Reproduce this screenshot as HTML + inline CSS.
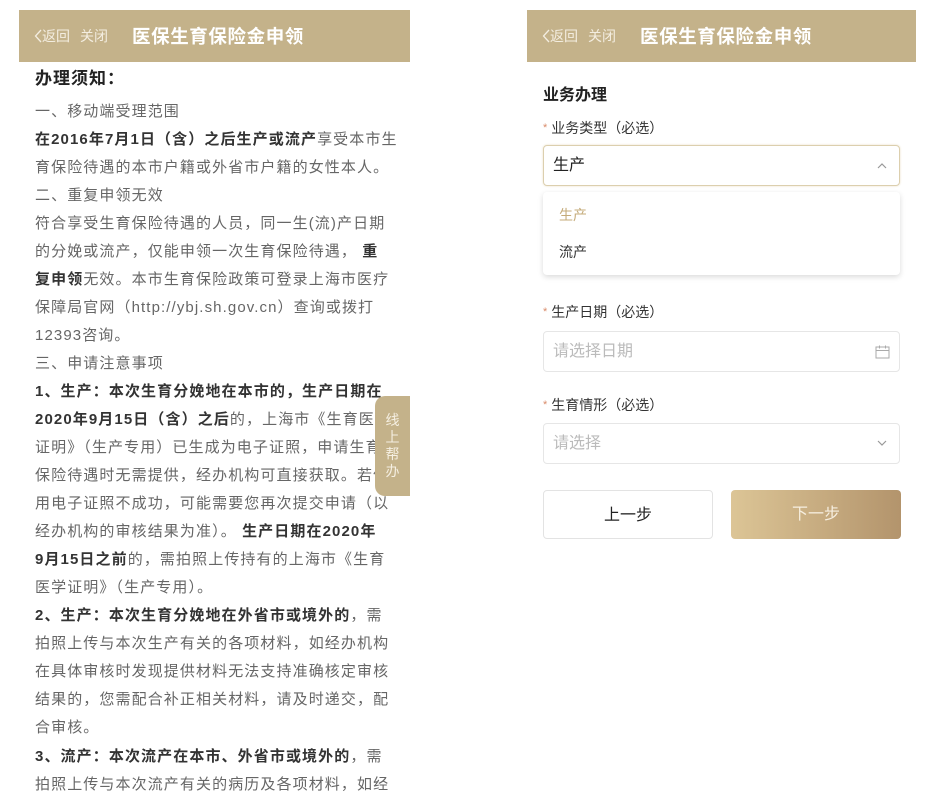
<!DOCTYPE html>
<html><head><meta charset="utf-8">
<style>
*{margin:0;padding:0;box-sizing:border-box}
body{width:930px;height:797px;background:#fff;position:relative;overflow:hidden;font-family:"Liberation Sans","Noto Sans CJK SC",sans-serif}
.hdr{position:absolute;top:10px;height:52px;background:#c4b28a;color:#fff;display:flex;align-items:center}
.hdr .s{font-size:14px;color:#f3ede0;letter-spacing:0;display:flex;align-items:center}
.hdr .t{font-size:18.5px;font-weight:bold;margin-left:24px;letter-spacing:0.6px}
.l{position:absolute;left:35px;font-size:15px;line-height:28px;height:28px;color:#666;letter-spacing:1.1px;white-space:nowrap}
.l b{color:#333}
.tab{position:absolute;left:375px;top:396px;width:35px;height:100px;background:#c4b28a;border-radius:10px 0 0 10px;color:#f5efe2;font-size:14px;line-height:17px;text-align:center;padding-top:16px}
.lab{position:absolute;left:543px;font-size:14px;color:#333;white-space:nowrap}
.lab i{color:#d98b6a;font-style:normal;font-size:11px;margin-right:4px;position:relative;top:-2px}
.box{position:absolute;left:543px;width:357px;height:41px;border:1px solid #e6e6e6;border-radius:4px;font-size:16px;color:#bbb;padding-left:9px;line-height:39px}
.btn{position:absolute;top:490px;height:49px;width:170px;border-radius:4px;font-size:16px;text-align:center;line-height:49px}
</style></head><body>
<div class="hdr" style="left:19px;width:391px"><span class="s" style="margin-left:15px"><svg width="8" height="14" viewBox="0 0 8 14"><path d="M7 1 L1.5 7 L7 13" fill="none" stroke="#f3ede0" stroke-width="1.3"/></svg>返回</span><span class="s" style="margin-left:10px">关闭</span><span class="t">医保生育保险金申领</span></div>
<div style="position:absolute;left:35px;top:64px;font-size:17px;font-weight:bold;color:#222;letter-spacing:1px">办理须知：</div>
<div class="l" style="top:98px">一、移动端受理范围</div>
<div class="l" style="top:126px"><b>在2016年7月1日（含）之后生产或流产</b>享受本市生</div>
<div class="l" style="top:154px">育保险待遇的本市户籍或外省市户籍的女性本人。</div>
<div class="l" style="top:182px">二、重复申领无效</div>
<div class="l" style="top:210px">符合享受生育保险待遇的人员，同一生(流)产日期</div>
<div class="l" style="top:238px">的分娩或流产，仅能申领一次生育保险待遇， <b>重</b></div>
<div class="l" style="top:266px"><b>复申领</b>无效。本市生育保险政策可登录上海市医疗</div>
<div class="l" style="top:294px">保障局官网（http://ybj.sh.gov.cn）查询或拨打</div>
<div class="l" style="top:322px">12393咨询。</div>
<div class="l" style="top:350px">三、申请注意事项</div>
<div class="l" style="top:378px"><b>1、生产：本次生育分娩地在本市的，生产日期在</b></div>
<div class="l" style="top:406px"><b>2020年9月15日（含）之后</b>的，上海市《生育医</div>
<div class="l" style="top:434px">证明》（生产专用）已生成为电子证照，申请生育</div>
<div class="l" style="top:462px">保险待遇时无需提供，经办机构可直接获取。若使</div>
<div class="l" style="top:490px">用电子证照不成功，可能需要您再次提交申请（以</div>
<div class="l" style="top:518px">经办机构的审核结果为准）。 <b>生产日期在2020年</b></div>
<div class="l" style="top:546px"><b>9月15日之前</b>的，需拍照上传持有的上海市《生育</div>
<div class="l" style="top:574px">医学证明》（生产专用）。</div>
<div class="l" style="top:602px"><b>2、生产：本次生育分娩地在外省市或境外的</b>，需</div>
<div class="l" style="top:630px">拍照上传与本次生产有关的各项材料，如经办机构</div>
<div class="l" style="top:658px">在具体审核时发现提供材料无法支持准确核定审核</div>
<div class="l" style="top:686px">结果的，您需配合补正相关材料，请及时递交，配</div>
<div class="l" style="top:714px">合审核。</div>
<div class="l" style="top:743px"><b>3、流产：本次流产在本市、外省市或境外的</b>，需</div>
<div class="l" style="top:771px">拍照上传与本次流产有关的病历及各项材料，如经</div>
<div class="tab">线<br>上<br>帮<br>办</div>

<div class="hdr" style="left:527px;width:389px"><span class="s" style="margin-left:15px"><svg width="8" height="14" viewBox="0 0 8 14"><path d="M7 1 L1.5 7 L7 13" fill="none" stroke="#f3ede0" stroke-width="1.3"/></svg>返回</span><span class="s" style="margin-left:10px">关闭</span><span class="t">医保生育保险金申领</span></div>
<div style="position:absolute;left:543px;top:81px;font-size:16px;font-weight:bold;color:#222">业务办理</div>
<div class="lab" style="top:118px"><i>*</i>业务类型（必选）</div>
<div class="box" style="top:145px;border-color:#dccfae;color:#222;box-shadow:0 0 2px #eadfc5">生产
<svg style="position:absolute;right:12px;top:16px" width="10" height="7" viewBox="0 0 10 7"><path d="M1 6 L5 2 L9 6" fill="none" stroke="#999" stroke-width="1.2"/></svg></div>
<div style="position:absolute;left:543px;top:192px;width:357px;height:83px;background:#fff;border-radius:4px;box-shadow:0 2px 6px rgba(0,0,0,0.15)">
<div style="position:absolute;left:16px;top:13px;font-size:14px;color:#c4ab7a">生产</div>
<div style="position:absolute;left:16px;top:50px;font-size:14px;color:#333">流产</div>
</div>
<div class="lab" style="top:302px"><i>*</i>生产日期（必选）</div>
<div class="box" style="top:331px">请选择日期
<svg style="position:absolute;right:9px;top:13px" width="15" height="14" viewBox="0 0 15 14"><rect x="1" y="2" width="13" height="11" fill="none" stroke="#aaa" stroke-width="1"/><path d="M1 5.5H14M4.5 0.5V3.5M10.5 0.5V3.5" stroke="#aaa" stroke-width="1"/></svg></div>
<div class="lab" style="top:395px"><i>*</i>生育情形（必选）</div>
<div class="box" style="top:423px">请选择
<svg style="position:absolute;right:12px;top:16px" width="10" height="7" viewBox="0 0 10 7"><path d="M1 1 L5 5 L9 1" fill="none" stroke="#999" stroke-width="1.2"/></svg></div>
<div class="btn" style="left:543px;border:1px solid #e3e3e3;color:#222">上一步</div>
<div class="btn" style="left:731px;background:linear-gradient(90deg,#dcc596,#b3946c);color:#f6eedf">下一步</div>
</body></html>
